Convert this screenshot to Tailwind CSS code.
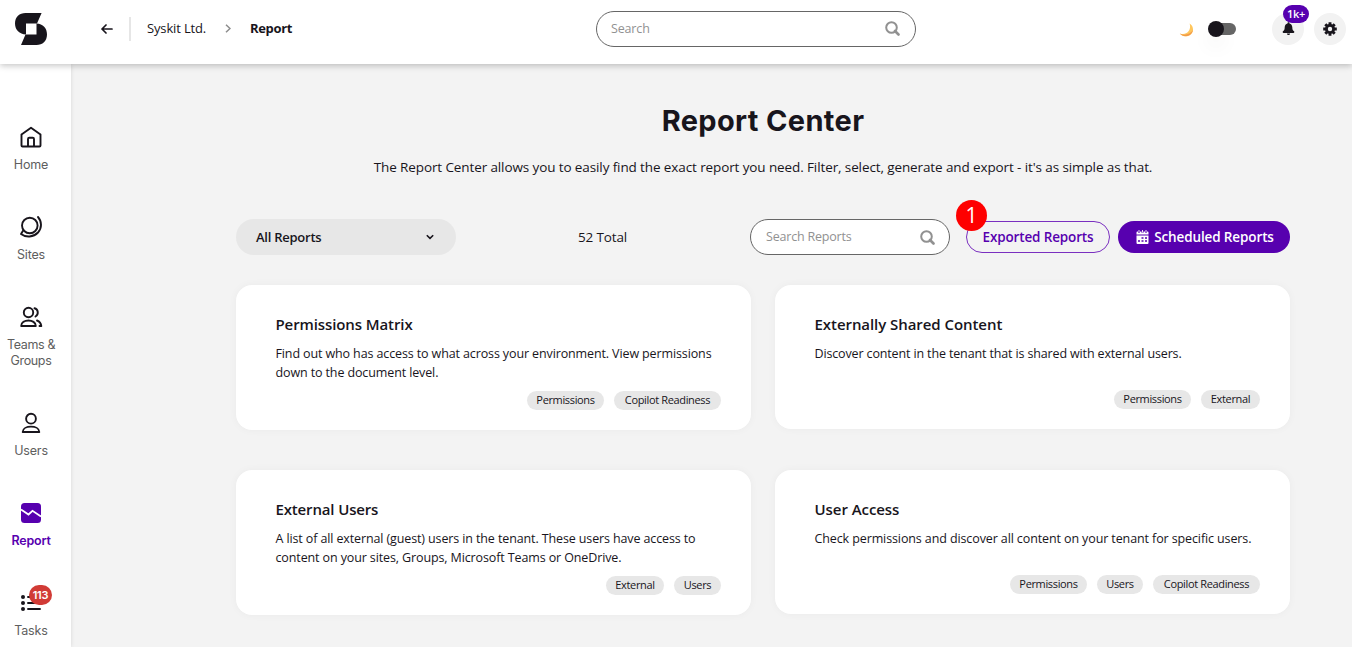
<!DOCTYPE html>
<html lang="en">
<head>
    <meta charset="UTF-8">
    <meta name="viewport" content="width=device-width, initial-scale=1.0">
    <title>Report Center</title>
    <script src="https://cdn.jsdelivr.net/npm/@tailwindcss/browser@4"></script>
</head>
<body class="h-[647px] overflow-hidden bg-[#f3f3f3] text-[#18151c] font-['Open_Sans',sans-serif] flex flex-col whitespace-nowrap">

    <!-- Top bar -->
    <header class="relative z-10 h-16 shrink-0 bg-white shadow-[0_2px_6px_rgba(0,0,0,0.22)] flex items-center pb-[7px]">
        <svg class="ml-[15px] mt-[1px] w-8 h-8" viewBox="0 0 32 32" fill="#18151c">
            <path d="M10.5 0H26.6L22 10.5H11V21.5C4.500 21 0 17 0 10.500C0 4 4.500 0 10.500 0Z"/>
            <path d="M21.500 32H6L10.500 21.500H21.500V10.500C28 11 32 15 32 21.500C32 28 27.500 32 21.500 32Z"/>
        </svg>
        <svg class="ml-[54px] w-3 h-[10px]" viewBox="0 0 12 10" fill="none" stroke="#18151c" stroke-width="1.7" stroke-linecap="round" stroke-linejoin="round"><path d="M5 1L1 5L5 9M1 5H11"/></svg>
        <div class="ml-4 w-0.5 h-6 bg-[#e6e6e6]"></div>
        <span class="ml-4 w-[60px] text-[13px] font-medium tracking-[-0.15px]">Syskit Ltd.</span>
        <svg class="ml-[18px] w-[6px] h-[9px]" viewBox="0 0 6 9" fill="none" stroke="#8c8c8c" stroke-width="1.500"><path d="M1 .7L5 4.500L1 8.300"/></svg>
        <span class="ml-[19px] w-[42px] text-[13px] font-bold tracking-[-0.35px]">Report</span>

        <div class="ml-[304px] w-[320px] h-9 rounded-full border border-[#666] bg-white flex items-center justify-between pl-[14px] pr-[15px]">
            <span class="pt-px text-[12.500px] text-[#919191] tracking-[-0.15px]">Search</span>
            <svg class="w-[15px] h-[15px]" viewBox="0 0 15 15" fill="none" stroke="#919191" stroke-width="2"><circle cx="6.500" cy="6.500" r="5.300"/><path d="M10 10L13.500 13.500" stroke-width="2.600" stroke-linecap="round"/></svg>
        </div>

        <svg class="ml-[263px] mt-[2px] w-[15px] h-[14px]" viewBox="0 0 15 14">
            <path d="M10.600.6C14.500 3 15.200 8 12 11.300C8.800 14.500 3.500 14 .8 10.400C4 11.700 7.500 11 9.500 8.300C11.200 6 11.500 3.200 10.600.6Z" fill="#ffc65c"/>
            <path d="M14 7C13.200 11.500 8.500 14.200 4 12.700C2.600 12.200 1.500 11.400.8 10.400C5.500 13 11 11.500 14 7Z" fill="#f29a4a"/>
        </svg>
        <div class="relative ml-[14px] w-7 h-4 flex items-center">
            <div class="ml-2 w-5 h-3 rounded-r-full bg-[#666]"></div>
            <div class="absolute left-0 top-0 size-4 rounded-full bg-[#18151c] shadow-[0_10px_20px_rgba(0,0,0,0.06)]"></div>
        </div>
        <div class="relative ml-9 size-8 rounded-full bg-[#f2f2f2] flex items-center justify-center">
            <svg class="w-[13px] h-[13px]" viewBox="0 0 13 13" fill="#18151c"><path d="M6.500.3C7.100.3 7.500.8 7.500 1.400C9.200 1.900 10.200 3.300 10.300 5.200C10.400 7.400 10.700 8.200 11.800 9C12.700 9.700 12.400 11 11.400 11H1.600C.6 11 .3 9.700 1.200 9C2.300 8.200 2.600 7.400 2.700 5.200C2.800 3.300 3.800 1.900 5.500 1.400C5.500.8 5.900.3 6.500.3ZM4.900 11.500H8.100C7.900 12.500 7.300 13 6.500 13S5.100 12.500 4.900 11.500Z"/></svg>
            <span class="absolute left-[11px] top-[-8px] w-[26px] h-[18px] rounded-full bg-[#5700af] text-white text-[11px] font-semibold leading-[18px] text-center tracking-[-0.3px]">1k+</span>
        </div>
        <div class="ml-[10px] size-8 rounded-full bg-[#f2f2f2] flex items-center justify-center">
            <svg class="size-[14px]" viewBox="0 0 14 14">
                <g stroke="#18151c" stroke-width="2.900"><path d="M7 .2V13.800M.2 7H13.800M2.300 2.300L11.700 11.700M11.700 2.300L2.300 11.700"/></g>
                <circle cx="7" cy="7" r="5" fill="#18151c"/><circle cx="7" cy="7" r="2.200" fill="#f2f2f2"/>
            </svg>
        </div>
    </header>

    <div class="flex flex-1 min-h-0">
        <!-- Side navigation -->
        <nav class="w-[71px] shrink-0 bg-white shadow-[0_0_4px_rgba(0,0,0,0.12)] pt-[61px] pr-[9px] flex flex-col gap-[42px] font-[Inter,sans-serif] text-[12.500px] leading-4 tracking-[-0.150px] text-[#5e5e5e] text-center">
            <a class="flex flex-col items-center gap-2">
                <svg class="size-6" viewBox="0 0 24 24" fill="none" stroke="#18151c" stroke-width="1.900" stroke-linejoin="round"><path d="M2.500 9.500L12 2.700L21.500 9.500V20.500Q21.500 21.500 20.500 21.500H3.500Q2.500 21.500 2.500 20.500ZM9 21.500V14Q9 12.700 10.300 12.700H13.700Q15 12.700 15 14V21.500"/></svg>
                <span>Home</span>
            </a>
            <a class="flex flex-col items-center gap-2">
                <svg class="size-6" viewBox="0 0 24 24" fill="none" stroke="#18151c" stroke-width="1.900" stroke-linecap="round" stroke-linejoin="round"><circle cx="10.800" cy="10.500" r="7.800"/><path d="M19 2C23 6.500 23 13 19 17.500C14.500 22.300 7 22.800 2 19L4 15.800"/></svg>
                <span>Sites</span>
            </a>
            <a class="flex flex-col items-center gap-2">
                <svg class="size-6" viewBox="0 0 24 24" fill="none" stroke="#18151c" stroke-width="1.900" stroke-linecap="round" stroke-linejoin="round"><circle cx="9.500" cy="7.500" r="4.700"/><path d="M15.500 3.300C19.300 4 20 9.500 16.500 11.500M2.200 21C2.200 13.700 16.800 13.700 16.800 21ZM18 15.500C20.500 16.500 22 18.500 22.300 21H20.500"/></svg>
                <span class="w-[62px] whitespace-normal tracking-[-0.350px]">Teams &amp; Groups</span>
            </a>
            <a class="flex flex-col items-center gap-2">
                <svg class="size-6" viewBox="0 0 24 24" fill="none" stroke="#18151c" stroke-width="1.900" stroke-linejoin="round"><circle cx="12" cy="7.700" r="4.900"/><path d="M3.700 21C3.700 13.800 20.300 13.800 20.300 21Z"/></svg>
                <span>Users</span>
            </a>
            <a class="flex flex-col items-center gap-2 text-[#5700af] font-semibold">
                <svg class="size-6" viewBox="0 0 24 24"><rect x="2" y="2" width="20" height="20" rx="3.500" fill="#5700af"/><path d="M2 8.500L9.500 13.500L13.500 9.800L22 15.500" fill="none" stroke="#fff" stroke-width="1.800"/></svg>
                <span class="tracking-[-0.200px]">Report</span>
            </a>
            <a class="relative flex flex-col items-center gap-2">
                <svg class="size-6" viewBox="0 0 24 24" fill="#18151c"><circle cx="4" cy="6" r="2"/><circle cx="4" cy="12" r="2"/><circle cx="4" cy="18" r="2"/><path d="M9 6H21M9 12H21M9 18H21" stroke="#18151c" stroke-width="1.900" stroke-linecap="round"/></svg>
                <span>Tasks</span>
                <span class="absolute left-[29px] top-[-6px] w-[23px] h-5 rounded-full bg-[#d13b36] text-white text-[11px] font-semibold leading-5 tracking-[-0.200px]">113</span>
            </a>
        </nav>

        <!-- Report list -->
        <main class="flex-1 pl-[165px] pr-[62px] pt-[37px]">
            <h1 class="text-center text-[29px] leading-[40px] font-bold font-[Inter,sans-serif] tracking-[0.350px]">Report Center</h1>
            <p class="mt-4 text-center text-[13.500px] leading-5 tracking-[-0.110px]">The Report Center allows you to easily find the exact report you need. Filter, select, generate and export - it's as simple as that.</p>

            <div class="mt-[42px] h-9 flex items-center">
                <div class="w-[220px] h-9 rounded-full bg-[#e7e7e7] flex items-center justify-between pl-5 pr-[22px]">
                    <span class="pt-px text-[13px] font-semibold tracking-[-0.250px]">All Reports</span>
                    <svg class="w-2 h-[6px]" viewBox="0 0 8 6" fill="none" stroke="#18151c" stroke-width="1.600"><path d="M.8 1.200L4 4.400L7.200 1.200"/></svg>
                </div>
                <span class="ml-[122px] w-[50px] text-[13.500px] tracking-[-0.150px]">52 Total</span>
                <div class="ml-[122px] w-[200px] h-9 rounded-full border border-[#666] bg-white flex items-center justify-between pl-[15px] pr-[14px]">
                    <span class="text-[12.500px] text-[#919191] tracking-[-0.200px]">Search Reports</span>
                    <svg class="w-[15px] h-[15px]" viewBox="0 0 15 15" fill="none" stroke="#919191" stroke-width="2"><circle cx="6.500" cy="6.500" r="5.300"/><path d="M10 10L13.500 13.500" stroke-width="2.600" stroke-linecap="round"/></svg>
                </div>
                <div class="relative ml-4 w-36 h-8 rounded-full border border-[#7a2fc0] text-[#5700af] text-[13.500px] font-semibold tracking-[-0.150px] flex items-center justify-center">
                    Exported Reports
                    <span class="absolute left-[-11px] top-[-22px] size-[31px] rounded-full bg-[#fe0000] text-white text-[21px] font-normal leading-[31px] text-center">1</span>
                </div>
                <div class="ml-2 w-[172px] h-8 rounded-full bg-[#5700af] text-white text-[13.500px] font-semibold tracking-[-0.120px] flex items-center justify-center gap-[5px] pl-0.5">
                    <svg class="w-[13px] h-[14px]" viewBox="0 0 12 14"><path d="M0 2.500Q0 1.500 1 1.500H11Q12 1.500 12 2.500V4.500H0ZM0 5.500H12V12.800Q12 14 11 14H1Q0 14 0 12.800Z" fill="#fff"/><path d="M2.500 0V2.800M6 0V2.800M9.500 0V2.800" stroke="#5700af" stroke-width="2"/><path d="M2.500 0V2.500M6 0V2.500M9.500 0V2.500" stroke="#fff" stroke-width=".9"/><path d="M5 8H7M8.500 8H10.500M1.500 11H3.500M5 11H7M8.500 11H10.500" stroke="#5700af" stroke-width="1.600"/></svg>
                    <span>Scheduled Reports</span>
                </div>
            </div>

            <div class="mt-[30px] grid grid-cols-2 gap-x-6 gap-y-10 items-start">
                <article class="h-[145px] rounded-2xl bg-white shadow-[0_0_8px_rgba(0,0,0,0.04)] pl-[39.500px] pr-[30px] pt-[29px] pb-5 flex flex-col">
                    <h2 class="text-[15px] leading-5 font-semibold tracking-[-0.100px]">Permissions Matrix</h2>
                    <p class="mt-[10px] text-[12.500px] leading-[19px] tracking-[-0.120px]">Find out who has access to what across your environment. View permissions<br>down to the document level.</p>
                    <div class="mt-auto flex justify-end gap-[10px] text-[11px] leading-[17px] tracking-[-0.350px]">
                        <span class="w-[77px] pb-0.5 text-center rounded-full bg-[#e7e7e7]">Permissions</span>
                        <span class="w-[107px] pb-0.5 text-center rounded-full bg-[#e7e7e7]">Copilot Readiness</span>
                    </div>
                </article>
                <article class="h-36 rounded-2xl bg-white shadow-[0_0_8px_rgba(0,0,0,0.04)] pl-[39.500px] pr-[30px] pt-[29px] pb-5 flex flex-col">
                    <h2 class="text-[15px] leading-5 font-semibold tracking-[-0.060px]">Externally Shared Content</h2>
                    <p class="mt-[10px] text-[12.500px] leading-[19px] tracking-[-0.140px]">Discover content in the tenant that is shared with external users.</p>
                    <div class="mt-auto flex justify-end gap-[10px] text-[11px] leading-[17px] tracking-[-0.350px]">
                        <span class="w-[77px] pb-0.5 text-center rounded-full bg-[#e7e7e7]">Permissions</span>
                        <span class="w-[59px] pb-0.5 text-center rounded-full bg-[#e7e7e7]">External</span>
                    </div>
                </article>
                <article class="h-[145px] rounded-2xl bg-white shadow-[0_0_8px_rgba(0,0,0,0.04)] pl-[39.500px] pr-[30px] pt-[29px] pb-5 flex flex-col">
                    <h2 class="text-[15px] leading-5 font-semibold tracking-[-0.150px]">External Users</h2>
                    <p class="mt-[10px] text-[12.500px] leading-[19px] tracking-[-0.120px]">A list of all external (guest) users in the tenant. These users have access to<br>content on your sites, Groups, Microsoft Teams or OneDrive.</p>
                    <div class="mt-auto flex justify-end gap-[10px] text-[11px] leading-[17px] tracking-[-0.350px]">
                        <span class="w-[58px] pb-0.5 text-center rounded-full bg-[#e7e7e7]">External</span>
                        <span class="w-[47px] pb-0.5 text-center rounded-full bg-[#e7e7e7]">Users</span>
                    </div>
                </article>
                <article class="h-36 rounded-2xl bg-white shadow-[0_0_8px_rgba(0,0,0,0.04)] pl-[39.500px] pr-[30px] pt-[29px] pb-5 flex flex-col">
                    <h2 class="text-[15px] leading-5 font-semibold tracking-[-0.060px]">User Access</h2>
                    <p class="mt-[10px] text-[12.500px] leading-[19px] tracking-[-0.110px]">Check permissions and discover all content on your tenant for specific users.</p>
                    <div class="mt-auto flex justify-end gap-[10px] text-[11px] leading-[17px] tracking-[-0.350px]">
                        <span class="w-[77px] pb-0.5 text-center rounded-full bg-[#e7e7e7]">Permissions</span>
                        <span class="w-[46px] pb-0.5 text-center rounded-full bg-[#e7e7e7]">Users</span>
                        <span class="w-[107px] pb-0.5 text-center rounded-full bg-[#e7e7e7]">Copilot Readiness</span>
                    </div>
                </article>
            </div>
        </main>
    </div>

</body>
</html>
